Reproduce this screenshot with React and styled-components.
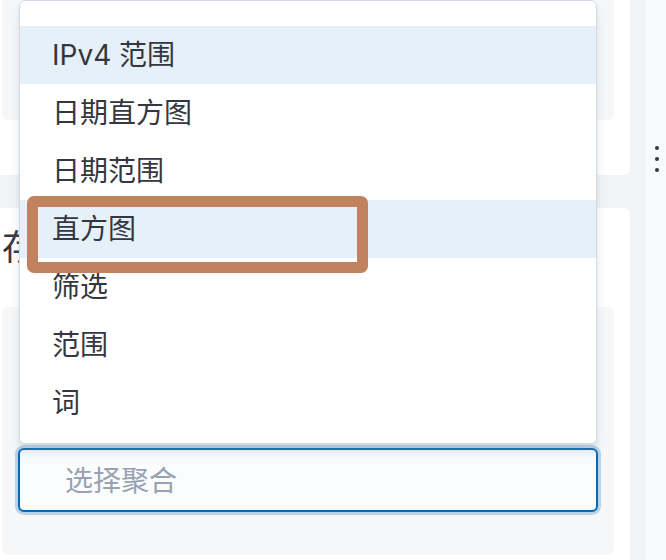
import styled, { createGlobalStyle } from 'styled-components'

const GlobalStyle = createGlobalStyle`
  html, body {
    margin: 0;
    padding: 0;
  }
  body {
    background: #f1f3f6;
    font-family: Inter, "Noto Sans CJK SC", sans-serif;
    color: #343741;
    overflow: hidden;
  }
`

const Page = styled.div`
  display: flex;
  width: 666px;
  height: 560px;
  overflow: hidden;
`

const Main = styled.div`
  flex: none;
  width: 646px;
  margin-left: -16px;
  display: flex;
  flex-direction: column;
  gap: 33px;
`

const Panel = styled.section`
  flex: none;
  background: #ffffff;
  border-radius: 6px;
  margin-top: ${(p) => (p.$first ? '-20px' : '0')};
  padding: ${(p) => (p.$first ? '0 16px 55px 18px' : '14px 16px 20px 18px')};
`

const Inset = styled.div`
  background: #f6f7f9;
  border-radius: 6px;
  height: ${(p) => (p.$height ? `${p.$height}px` : 'auto')};
  padding: ${(p) => p.$pad || '0'};
`

const Title = styled.h2`
  margin: 0 0 35px;
  font-size: 35px;
  line-height: 50px;
  font-weight: 400;
  white-space: nowrap;
`

const Gutter = styled.div`
  flex: none;
  width: 16px;
`

const Side = styled.aside`
  flex: 1;
  background: #f8f9fb;
  padding-top: 140px;
  display: flex;
  justify-content: center;
  align-items: flex-start;
`

const InputWrap = styled.div`
  position: relative;
`

const Field = styled.div`
  box-sizing: border-box;
  height: 64px;
  border: 2px solid #0868b2;
  border-radius: 6px;
  background: #fbfcfd;
  box-shadow: 0 0 0 3px #b8d2e8, inset 0 7px 8px -6px rgba(52, 55, 65, 0.08);
  display: flex;
  align-items: center;
  padding-left: 45px;
  padding-bottom: 3px;
  font-size: 28px;
  color: #98a2b3;
`

const Popover = styled.div`
  position: absolute;
  left: 1px;
  right: 1px;
  bottom: calc(100% + 4px);
  background: #ffffff;
  border: 1px solid #d3dae6;
  border-radius: 6px;
  padding: 25px 0 11px;
  box-shadow: 0 8px 14px -2px rgba(152, 162, 179, 0.25),
    0 3px 5px -1px rgba(152, 162, 179, 0.2);
  z-index: 2;
`

const Option = styled.div`
  position: relative;
  height: 58px;
  line-height: 58px;
  padding-left: 32px;
  font-size: 28px;
  color: #343741;
  background: ${(p) => (p.$active ? '#e6f0f8' : 'transparent')};
  white-space: nowrap;
`

const Mark = styled.span`
  position: absolute;
  left: 7px;
  top: -4px;
  width: 341px;
  height: 77px;
  box-sizing: border-box;
  border: 11px solid #c1835f;
  border-radius: 7px;
  z-index: 3;
  pointer-events: none;
`

const options = [
  { label: 'IPv4 范围', active: true },
  { label: '日期直方图' },
  { label: '日期范围' },
  { label: '直方图', active: true, marked: true },
  { label: '筛选' },
  { label: '范围' },
  { label: '词' },
]

const MoreDots = () => (
  <svg width="20" height="38" viewBox="0 0 20 38">
    <circle cx="11" cy="8" r="2" fill="#343741" />
    <circle cx="11" cy="19" r="2" fill="#343741" />
    <circle cx="11" cy="30" r="2" fill="#343741" />
  </svg>
)

export default function App() {
  return (
    <>
      <GlobalStyle />
      <Page>
        <Main>
          <Panel $first>
            <Inset $height={140} />
          </Panel>
          <Panel>
            <Title>存</Title>
            <Inset $pad="141px 16px 43px">
              <InputWrap>
                <Popover>
                  {options.map((o) => (
                    <Option key={o.label} $active={o.active}>
                      {o.label}
                      {o.marked && <Mark />}
                    </Option>
                  ))}
                </Popover>
                <Field>选择聚合</Field>
              </InputWrap>
            </Inset>
          </Panel>
        </Main>
        <Gutter />
        <Side>
          <MoreDots />
        </Side>
      </Page>
    </>
  )
}
